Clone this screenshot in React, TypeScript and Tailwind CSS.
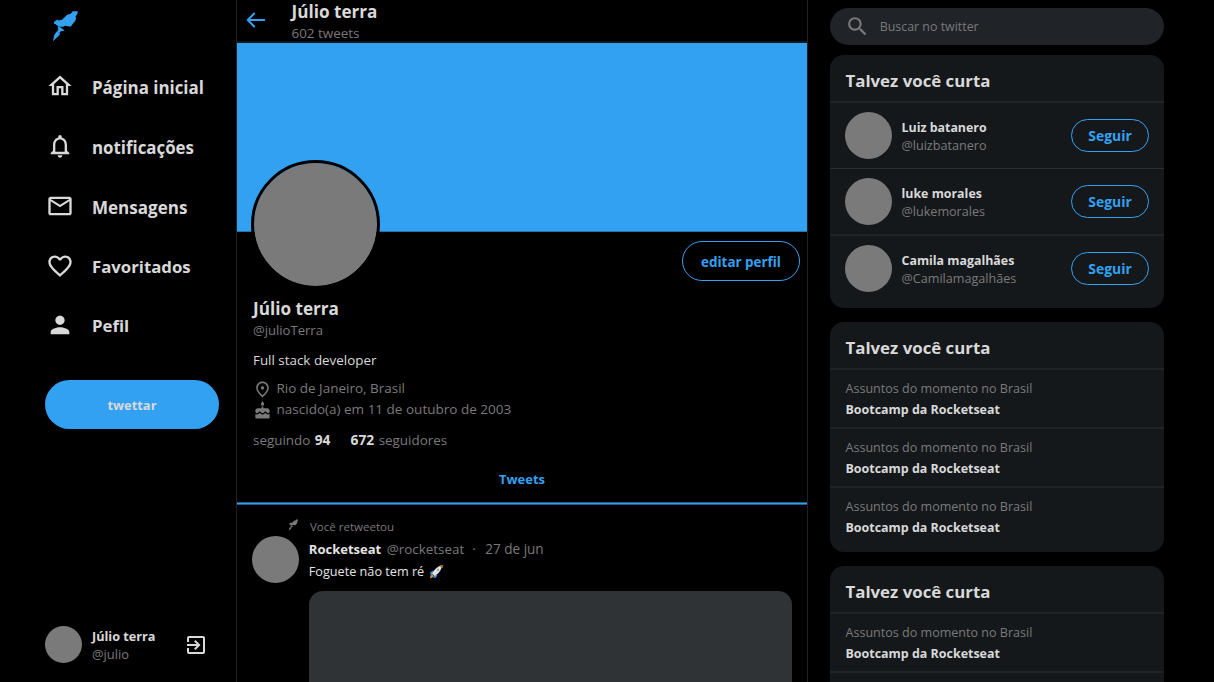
import type { ReactNode } from 'react';
import {
  MdCake,
  MdExitToApp,
  MdFavoriteBorder,
  MdMailOutline,
  MdNotificationsNone,
  MdOutlineHome,
  MdOutlinePlace,
  MdPerson,
  MdSearch,
} from 'react-icons/md';

function RocketLogo({ className }: { className: string }) {
  return (
    <svg viewBox="52 10 27 32" fill="currentColor" className={className}>
      <path d="M77.600 11.200H72.800l-2.200 2.600-3.400.9L62 19.700l-3.600.8-1.100-1L54 22v1.400l2 1.100 2.500 2.300h4.800l1.600-1 5.800.9 2.300-3.300 2.200-2.300.900-3.100-.6-1.300 2.100-3.300z" />
      <path d="M57.600 26.500l3.700 1.200 3.200 3-3.700.6-1.500 1.700-2.200-1.200 1.200-2.600z" />
      <path d="M56.600 31.500l3.300 1.600-.4 1.800L53 41.300l1.200-6z" />
    </svg>
  );
}

function ArrowLeft() {
  return (
    <svg viewBox="0 0 24 24" fill="none" stroke="currentColor" strokeWidth="2.200" strokeLinecap="round" strokeLinejoin="round" className="size-[22px] text-[#33a1f2]">
      <path d="M10 19l-7-7m0 0l7-7m-7 7h18" />
    </svg>
  );
}

function RocketEmoji() {
  return (
    <svg viewBox="0 0 15 15" className="mt-[3px] ml-[5px] size-[15px]">
      <path d="M4 6.500L1.200 8.600l.4 2.600L5 10zM8.500 11l-2 3-2.400-.6L5.500 10z" fill="#2f9be8" />
      <path d="M1 14.300l.6-2.800 2-.9.900 1.100-1 1.900z" fill="#e8912d" />
      <path d="M3.200 9.500C5 5.500 8 2.500 12.800 1.500 12.700 6 9.500 9.800 5.500 12z" fill="#dfe3e6" />
      <path d="M10.400 1.400L14.300.8l-.6 3.800z" fill="#a8691f" />
      <circle cx="9" cy="5.900" r="1.100" fill="#8fa3b0" />
    </svg>
  );
}

function NavItem({ icon, children, className }: { icon: ReactNode; children: ReactNode; className: string }) {
  return (
    <li className={`flex items-center gap-[18px] leading-6 font-bold ${className}`}>
      <span className="-mt-[3px] text-[28px]">{icon}</span>
      {children}
    </li>
  );
}

function Card({ children, className }: { children: ReactNode; className: string }) {
  return (
    <section className={`shrink-0 overflow-hidden rounded-[14px] bg-[#15181b] ${className}`}>
      <h2 className="h-12 border-b-2 border-[#202427] pt-[13.6px] pl-[15.5px] text-[16.84px] leading-6 font-bold">Talvez você curta</h2>
      {children}
    </section>
  );
}

const people = [
  { name: 'Luiz batanero', user: '@luizbatanero', row: 'h-[66px] border-b border-[#2b2f32]' },
  { name: 'luke morales', user: '@lukemorales', row: 'h-[67px] border-b-2 border-[#202427]' },
  { name: 'Camila magalhães', user: '@Camilamagalhães', row: 'h-[65px]' },
];

function Trend({ last = false }: { last?: boolean }) {
  return (
    <li className={`h-[59px] pt-[9px] pl-[15.5px] leading-5 ${last ? '' : 'border-b-2 border-[#202427]'}`}>
      <p className="text-[12.56px] text-[#7a7a7a]">Assuntos do momento no Brasil</p>
      <p className="mt-px text-[12.46px] font-bold">Bootcamp da Rocketseat</p>
    </li>
  );
}

export default function App() {
  return (
    <div className="flex h-[682px] overflow-hidden bg-black font-['Open_Sans','Noto_Sans',sans-serif] text-[#d9d9d9]">
      <aside className="flex w-[236px] shrink-0 flex-col pl-[45px]">
        <RocketLogo className="mt-[10px] ml-[7px] h-8 w-[27px] shrink-0 text-[#33a1f2]" />
        <ul className="mt-[15px] pl-px">
          <NavItem className="h-[60px] pt-[1.2px] text-[16.92px]" icon={<MdOutlineHome />}>Página inicial</NavItem>
          <NavItem className="h-[60px] pt-[1.2px] text-[16.87px]" icon={<MdNotificationsNone />}>notificações</NavItem>
          <NavItem className="h-[60px] pt-[1.2px] text-[17.05px]" icon={<MdMailOutline />}>Mensagens</NavItem>
          <NavItem className="h-[60px] text-[16.75px]" icon={<MdFavoriteBorder />}>Favoritados</NavItem>
          <NavItem className="h-[59px] pb-px text-[16.8px]" icon={<MdPerson />}>Pefil</NavItem>
        </ul>
        <button className="mt-6 h-[49px] w-[174px] shrink-0 rounded-full bg-[#33a1f2] pt-0.5 text-[12.87px] font-bold">twettar</button>
        <div className="mt-auto mb-[19px] flex items-center">
          <div className="size-[37px] rounded-full bg-[#7a7a7a]" />
          <div className="ml-[10px] w-[92px] leading-[18px]">
            <p className="text-[12.66px] font-bold">Júlio terra</p>
            <p className="text-[12.9px] text-[#7a7a7a]">@julio</p>
          </div>
          <MdExitToApp className="text-[24px]" />
        </div>
      </aside>

      <main className="w-[572px] shrink-0 border-x border-[#202127]">
        <header className="flex h-[43px] items-start border-b-2 border-[#16171a]">
          <div className="mt-[9px] ml-2 w-[46.5px]">
            <ArrowLeft />
          </div>
          <div>
            <h1 className="h-[22px] pt-[0.6px] text-[17.15px] leading-[22px] font-bold">Júlio terra</h1>
            <p className="mt-px text-[13.43px] leading-5 text-[#7a7a7a]">602 tweets</p>
          </div>
        </header>
        <div className="h-[189px] border-b border-[#2474ae] bg-[#33a1f2]" />
        <section className="pl-4">
          <div className="flex h-16 items-start justify-between pr-[7px]">
            <div className="-mt-[72px] -ml-[2px] size-[129px] shrink-0 rounded-full border-[3px] border-black bg-[#7a7a7a] bg-clip-padding" />
            <button className="mt-[9px] h-10 w-[118px] rounded-full border border-[#33a1f2] pt-[3px] text-[13.43px] font-bold text-[#33a1f2]">editar perfil</button>
          </div>
          <h2 className="h-6 pt-[0.6px] text-[17.15px] leading-6 font-bold">Júlio terra</h2>
          <p className="text-[13.07px] leading-5 text-[#7a7a7a]">@julioTerra</p>
          <p className="mt-[10px] text-[13.4px] leading-5">Full stack developer</p>
          <p className="mt-2 flex h-5 items-start gap-[5px] text-[13.48px] leading-5 text-[#7a7a7a]">
            <MdOutlinePlace className="mt-[1.5px] -ml-[0.5px] text-[19px]" />
            Rio de Janeiro, Brasil
          </p>
          <p className="mt-px flex h-5 items-start gap-[5px] text-[13.53px] leading-5 text-[#7a7a7a]">
            <MdCake className="mt-[2px] -ml-[0.5px] text-[19px]" />
            nascido(a) em 11 de outubro de 2003
          </p>
          <p className="mt-[11px] flex h-5 text-[13.4px] leading-5 text-[#7a7a7a]">
            <span>seguindo</span>
            <b className="ml-[4.5px] text-[13.8px] text-[#d9d9d9]">94</b>
            <b className="ml-[20px] text-[13.8px] text-[#d9d9d9]">672</b>
            <span className="ml-[4.5px]">seguidores</span>
          </p>
        </section>
        <div className="h-[52px] pt-[19px] text-center text-[12.97px] leading-5 font-bold text-[#33a1f2]">Tweets</div>
        <div className="h-[3px] border-y border-[#1d5c8a] bg-[#33a1f2]" />

        <article className="pt-[14px] pr-[15.5px] pl-[15px]">
          <p className="flex h-4 text-[11.52px] leading-4 text-[#7a7a7a]">
            <RocketLogo className="mr-[11px] ml-[36px] h-3 w-[11px]" />
            Você retweetou
          </p>
          <div className="mt-px flex items-start">
            <div className="size-[47px] shrink-0 rounded-full bg-[#7a7a7a]" />
            <div className="mt-[3px] ml-[9.8px] grow leading-5">
              <p className="flex text-[13.41px] text-[#7a7a7a]">
                <b className="text-[13.03px] text-[#e4e4e4]">Rocketseat</b>
                <span className="ml-[5.5px]">@rocketseat</span>
                <span className="ml-[8px] w-[13px]">·</span>
                <span className="text-[13.56px]">27 de jun</span>
              </p>
              <p className="mt-[2px] flex h-5 text-[12.67px] text-[#e4e4e4]">
                Foguete não tem ré
                <RocketEmoji />
              </p>
              <div className="mt-[10px] h-[280px] rounded-[14px] bg-[#2f3336]" />
            </div>
          </div>
        </article>
      </main>

      <aside className="ml-[22px] flex w-[334px] shrink-0 flex-col pt-[7.5px]">
        <label className="flex h-[37px] shrink-0 items-center rounded-full bg-[#202327] pl-[15px] text-[#7a7a7a]">
          <MdSearch className="text-[25px]" />
          <span className="ml-[9.7px] pt-[2.6px] text-[12.41px]">Buscar no twitter</span>
        </label>
        <Card className="mt-[10.5px] h-[252.5px]">
          <ul>
            {people.map((p) => (
              <li key={p.user} className={`flex items-center px-[15px] ${p.row}`}>
                <div className="size-[47px] rounded-full bg-[#7a7a7a]" />
                <div className="ml-[9.500px] grow pt-0.5 leading-[18px]">
                  <p className="text-[12.4px] font-bold">{p.name}</p>
                  <p className="text-[12.6px] text-[#7a7a7a]">{p.user}</p>
                </div>
                <button className="h-[33px] w-[78px] rounded-full border border-[#33a1f2] pt-0.5 text-[13.93px] font-bold text-[#33a1f2]">Seguir</button>
              </li>
            ))}
          </ul>
        </Card>
        <Card className="mt-[14.5px] h-[229.5px]">
          <ul>
            <Trend />
            <Trend />
            <Trend last />
          </ul>
        </Card>
        <Card className="mt-[14.5px] h-[229.5px]">
          <ul>
            <Trend />
          </ul>
        </Card>
      </aside>
    </div>
  );
}
